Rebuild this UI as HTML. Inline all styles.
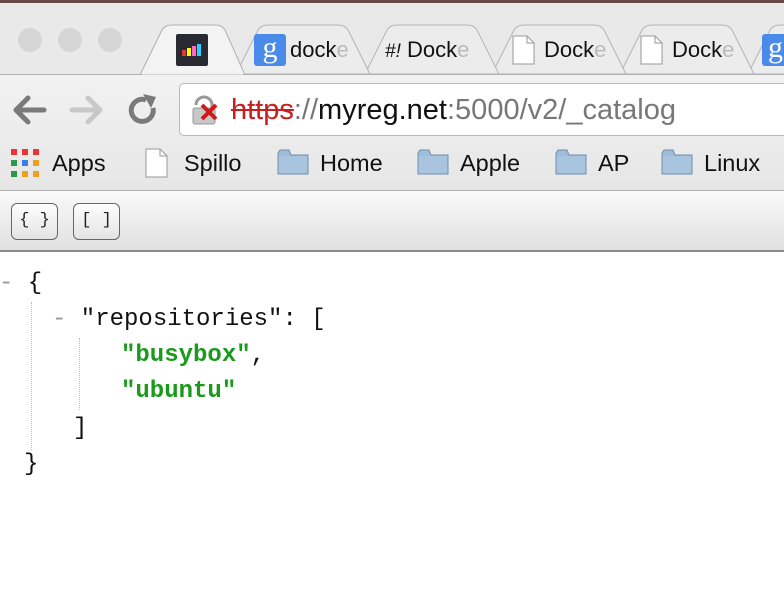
<!DOCTYPE html>
<html><head><meta charset="utf-8"><style>
*{margin:0;padding:0;box-sizing:border-box}
body{width:784px;height:608px;overflow:hidden;background:#fff;font-family:"Liberation Sans",sans-serif;position:relative}
.abs{position:absolute}
.t{font-size:22px;color:#111;white-space:nowrap}
.b{font-size:23.5px;color:#111;white-space:nowrap}
.mono{font-family:"Liberation Mono",monospace;font-size:24px;position:absolute;white-space:pre;color:#111}
.g{color:#1a9a1a;font-weight:bold}
.fold{color:#999}
.btn{position:absolute;top:203px;width:47px;height:37px;border:1.5px solid #666;border-radius:6px;background:linear-gradient(#fdfdfd,#e4e4e4);font-family:"Liberation Mono",monospace;font-size:17px;text-align:center;line-height:33px;color:#222}
.folder{position:absolute;top:149px;width:32px;height:26px}
</style></head><body>
<div class="abs" style="left:0;top:0;width:784px;height:3px;background:#6b4848"></div>
<div class="abs" style="left:0;top:3px;width:784px;height:72px;background:#e9e9e9"></div>
<div class="abs" style="left:18px;top:28px;width:24px;height:24px;border-radius:50%;background:#d6d6d6"></div>
<div class="abs" style="left:58px;top:28px;width:24px;height:24px;border-radius:50%;background:#d6d6d6"></div>
<div class="abs" style="left:98px;top:28px;width:24px;height:24px;border-radius:50%;background:#d6d6d6"></div>
<svg class="abs" style="left:0;top:0" width="784" height="80">
<g fill="#ececec" stroke="#b5b5b5" stroke-width="1">
<path d="M748,74 L770,30 Q773,25 780,25 L800,25 L800,74Z"/>
<path d="M620,74 L642,30 Q645,25 652,25 L722,25 Q729,25 732,30 L754,74Z"/>
<path d="M492,74 L514,30 Q517,25 524,25 L594,25 Q601,25 604,30 L626,74Z"/>
<path d="M365,74 L387,30 Q390,25 397,25 L467,25 Q474,25 477,30 L499,74Z"/>
<path d="M236,74 L258,30 Q261,25 268,25 L338,25 Q345,25 348,30 L370,74Z"/>
</g>
<path d="M140,75 L162,30 Q165,25 172,25 L215,25 Q222,25 225,30 L245,75Z" fill="#f3f3f3" stroke="#b0b0b0"/>
<line x1="0" y1="74.5" x2="142" y2="74.5" stroke="#b0b0b0"/><line x1="243" y1="74.5" x2="784" y2="74.5" stroke="#b0b0b0"/>
</svg>
<div class="abs" style="left:176px;top:34px;width:32px;height:32px;background:#2a2a33;border-radius:2px"></div>
<div class="abs" style="left:182px;top:50px;width:4px;height:6px;background:#e33"></div>
<div class="abs" style="left:187px;top:48px;width:4px;height:8px;background:#ff0"></div>
<div class="abs" style="left:192px;top:46px;width:4px;height:10px;background:#f6c"></div>
<div class="abs" style="left:197px;top:44px;width:4px;height:12px;background:#3cf"></div>
<div class="abs" style="left:254px;top:34px;width:32px;height:32px;background:#4a8ae8;border-radius:3px;color:#fff;font-family:'Liberation Serif',serif;font-size:30px;text-align:center;line-height:28px">g</div>
<div class="abs t" style="left:290px;top:37px">dock<span style="color:#bbb">e</span></div>
<div class="abs t" style="left:385px;top:37px"><i style="font-size:19px">#!</i> Dock<span style="color:#bbb">e</span></div>
<svg class="abs" style="left:512px;top:35px" width="24" height="30"><path d="M1,1 H15 L22,8 V29 H1Z" fill="#fff" stroke="#999"/><path d="M15,1 V8 H22" fill="none" stroke="#999"/></svg>
<div class="abs t" style="left:544px;top:37px">Dock<span style="color:#bbb">e</span></div>
<svg class="abs" style="left:640px;top:35px" width="24" height="30"><path d="M1,1 H15 L22,8 V29 H1Z" fill="#fff" stroke="#999"/><path d="M15,1 V8 H22" fill="none" stroke="#999"/></svg>
<div class="abs t" style="left:672px;top:37px">Dock<span style="color:#bbb">e</span></div>
<div class="abs" style="left:762px;top:34px;width:32px;height:32px;background:#4a8ae8;border-radius:3px;color:#fff;font-family:'Liberation Serif',serif;font-size:30px;line-height:28px;padding-left:6px">g</div>
<div class="abs" style="left:0;top:75px;width:784px;height:116px;background:linear-gradient(#f2f2f2,#e6e6e6)"></div>
<svg class="abs" style="left:10px;top:93px" width="150" height="34">
<path d="M6,17 H34 M18,5 L6,17 L18,29" fill="none" stroke="#7a7a7a" stroke-width="5" stroke-linecap="round" stroke-linejoin="round"/>
<path d="M62,17 H90 M78,5 L90,17 L78,29" fill="none" stroke="#c8c8c8" stroke-width="5" stroke-linecap="round" stroke-linejoin="round"/>
<path d="M143,15 A11,11 0 1 1 136,7" fill="none" stroke="#7a7a7a" stroke-width="5"/>
<path d="M133,1 L146,4 L141,15Z" fill="#7a7a7a"/>
</svg>
<div class="abs" style="left:179px;top:83px;width:620px;height:53px;background:#fff;border:1px solid #b8b8b8;border-radius:5px"></div>
<svg class="abs" style="left:192px;top:95px" width="34" height="32">
<path d="M4,10 A8,8 0 0 1 20,10 V14" fill="none" stroke="#999" stroke-width="3"/>
<rect x="1" y="13" width="22" height="16" rx="2" fill="#c8c8c8" stroke="#999"/>
<path d="M10,10 L24,24 M24,10 L10,24" stroke="#d01818" stroke-width="4"/>
</svg>
<div class="abs" style="left:231px;top:94px;font-size:29px;white-space:nowrap;color:#111"><span style="color:#c62020;text-decoration:line-through">https</span><span style="color:#777">://</span>myreg.net<span style="color:#777">:5000/v2/_catalog</span></div>
<svg class="abs" style="left:11px;top:149px" width="28" height="28">
<g><rect x="0" y="0" width="6" height="6" fill="#e33"/><rect x="11" y="0" width="6" height="6" fill="#e33"/><rect x="22" y="0" width="6" height="6" fill="#e33"/>
<rect x="0" y="11" width="6" height="6" fill="#2a9a4a"/><rect x="11" y="11" width="6" height="6" fill="#3a7ee8"/><rect x="22" y="11" width="6" height="6" fill="#f0a020"/>
<rect x="0" y="22" width="6" height="6" fill="#2a9a4a"/><rect x="11" y="22" width="6" height="6" fill="#f0a020"/><rect x="22" y="22" width="6" height="6" fill="#f0a020"/></g></svg>
<div class="abs b" style="left:52px;top:150px">Apps</div>
<svg class="abs" style="left:145px;top:148px" width="24" height="30"><path d="M1,1 H15 L22,8 V29 H1Z" fill="#fff" stroke="#999"/><path d="M15,1 V8 H22" fill="none" stroke="#999"/></svg>
<div class="abs b" style="left:184px;top:150px">Spillo</div>
<svg class="folder" style="left:277px"><path d="M1,4 V25 H31 V6 H14 L12,1 H3Z" fill="#9fbcd9" stroke="#6f8fb0"/><rect x="1.5" y="7" width="29" height="17.5" fill="#a9c4de"/></svg>
<div class="abs b" style="left:320px;top:150px">Home</div>
<svg class="folder" style="left:417px"><path d="M1,4 V25 H31 V6 H14 L12,1 H3Z" fill="#9fbcd9" stroke="#6f8fb0"/><rect x="1.5" y="7" width="29" height="17.5" fill="#a9c4de"/></svg>
<div class="abs b" style="left:460px;top:150px">Apple</div>
<svg class="folder" style="left:555px"><path d="M1,4 V25 H31 V6 H14 L12,1 H3Z" fill="#9fbcd9" stroke="#6f8fb0"/><rect x="1.5" y="7" width="29" height="17.5" fill="#a9c4de"/></svg>
<div class="abs b" style="left:598px;top:150px">AP</div>
<svg class="folder" style="left:661px"><path d="M1,4 V25 H31 V6 H14 L12,1 H3Z" fill="#9fbcd9" stroke="#6f8fb0"/><rect x="1.5" y="7" width="29" height="17.5" fill="#a9c4de"/></svg>
<div class="abs b" style="left:704px;top:150px">Linux</div>
<div class="abs" style="left:0;top:190px;width:784px;height:1px;background:#b0b0b0"></div>
<div class="abs" style="left:0;top:191px;width:784px;height:61px;background:linear-gradient(#fafafa,#e0e0e0);border-bottom:2px solid #8a8a8a"></div>
<div class="btn" style="left:11px">{ }</div>
<div class="btn" style="left:73px">[ ]</div>
<div class="abs" style="left:31px;top:302px;height:148px;border-left:1px dotted #bbb"></div>
<div class="abs" style="left:79px;top:338px;height:72px;border-left:1px dotted #bbb"></div>
<div class="mono" style="left:-1px;top:270px"><span class="fold">-</span> {</div>
<div class="mono" style="left:52px;top:306px"><span class="fold">-</span> "repositories": [</div>
<div class="mono" style="left:121px;top:342px"><span class="g">"busybox"</span>,</div>
<div class="mono" style="left:121px;top:378px"><span class="g">"ubuntu"</span></div>
<div class="mono" style="left:73px;top:415px">]</div>
<div class="mono" style="left:24px;top:451px">}</div>
</body></html>
